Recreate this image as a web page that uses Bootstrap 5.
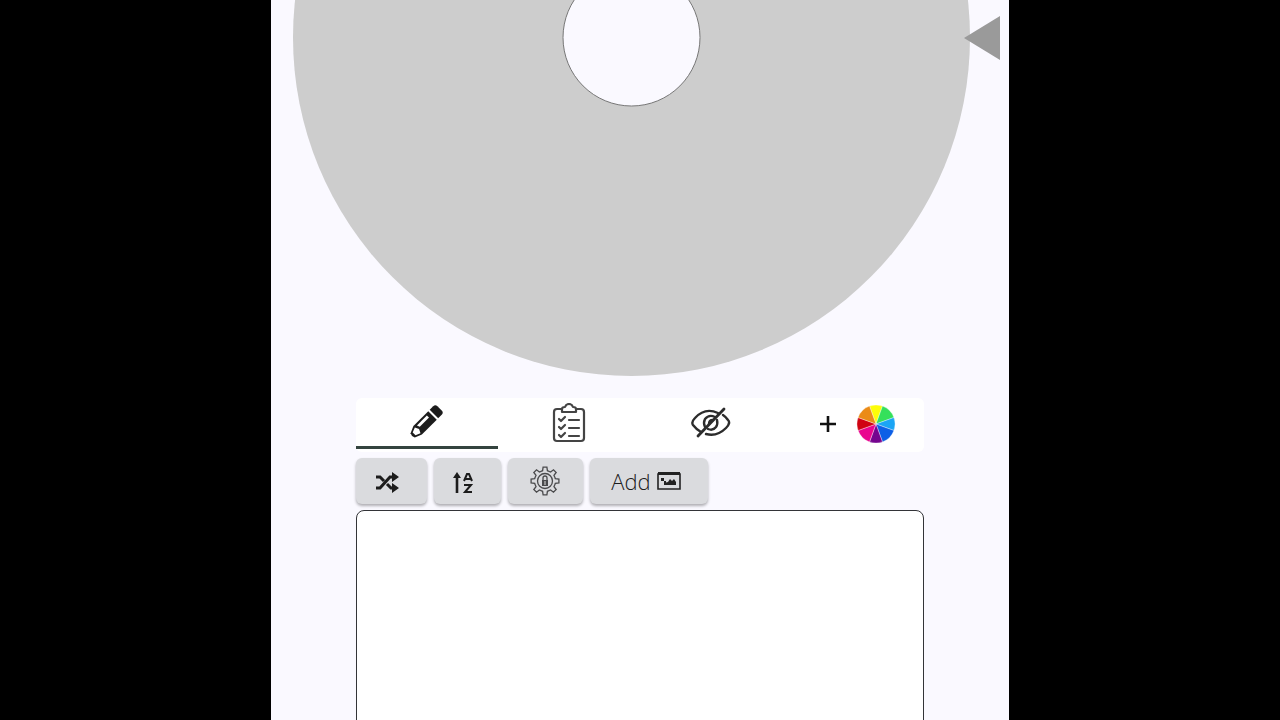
<!DOCTYPE html>
<html lang="en">
<head>
<meta charset="utf-8">
<meta name="viewport" content="width=device-width, initial-scale=1">
<title>Wheel</title>
<link href="https://cdn.jsdelivr.net/npm/bootstrap@5.3.0/dist/css/bootstrap.min.css" rel="stylesheet">
<style>
  body { background: #000; font-family: "Open Sans", "Noto Sans", sans-serif; }
  .stage { max-width: 738px; background: #faf9ff; }
  .wheel { width: 100%; }
  .panel { width: 77%; }
  .tabs { background: #fff; height: 54px; }
  .tab-btn { border: 0; border-bottom: 3px solid transparent; border-radius: 0; padding: 2px 0 0; background: none; height: 51px; color: #1c1c1c; }
  .tab-btn.active { border-bottom-color: #34443f; padding: 0 0 2px; }
  .tab-btn.add-wheel { padding: 4px 0 0 6px; }
  .tools { gap: 7px; padding: 6px 0; }
  .tool { height: 46px; border: 0; border-radius: 6px; background: #dadbde; color: #1c1c1c; box-shadow: 0 2px 3px #0000004d; display: flex; align-items: center; justify-content: center; padding: 0 8px; }
  .w-shuffle { width: 71px; }
  .w-sort { width: 67px; }
  .w-gear { width: 75px; }
  .w-add { width: 118px; font-size: 22px; font-weight: 300; line-height: 30px; gap: 6px; padding: 0 14px 0 8px; }
  .entries { height: 260px; border: 1px solid #333438; border-radius: 8px; resize: none; background: #fff; }
  .tab-btn svg, .tool svg { display: block; flex-shrink: 0; }
</style>
</head>
<body>
<main class="stage vh-100 mx-auto overflow-hidden d-flex flex-column">
  <svg class="wheel flex-shrink-0 d-block" viewBox="0 0 738 398" role="img" aria-label="Wheel">
    <circle cx="360.500" cy="37.500" r="338.500" fill="#cdcdcd"/>
    <circle cx="360.500" cy="37.500" r="68.500" fill="#faf9ff" stroke="#777" stroke-width="1"/>
    <path d="M693 38L729 16V60Z" fill="#9a9a9a"/>
  </svg>
  <section class="panel mx-auto flex-shrink-0">
    <nav class="tabs row g-0 rounded-2" aria-label="Views">
      <button class="tab-btn active col-3 d-flex align-items-center justify-content-center" type="button" aria-label="Edit">
        <svg width="34" height="34" viewBox="0 0 34 34"><g transform="translate(2 32) rotate(-45)">
          <path d="M0 0L1-3 8-6H29V6H8L1 3Z" fill="#1c1c1c"/>
          <path d="M3-2L8-4 10 0 8 4 3 2Z" fill="#fff"/>
          <path d="M11-4H25V-1H12Z" fill="#fff"/>
          <path d="M31-6H36Q39-6 39-3V3Q39 6 36 6H31Z" fill="#1c1c1c"/>
        </g></svg>
      </button>
      <button class="tab-btn col-3 d-flex align-items-center justify-content-center" type="button" aria-label="List">
        <svg width="34" height="40" viewBox="0 0 34 40" fill="none" stroke="#444" stroke-width="2.200" stroke-linejoin="round" stroke-linecap="round">
          <path d="M10 6H5Q2 6 2 9V35Q2 38 5 38H29Q32 38 32 35V9Q32 6 29 6H24"/>
          <path d="M10 9V6Q10 4 13 4 14 1 17 1T21 4Q24 4 24 6V9Z"/>
          <path d="M7 16L9 18 13 14M7 24L9 26 13 22M7 32L9 34 13 30M17 17H27M17 25H27M17 33H27"/>
        </svg>
      </button>
      <button class="tab-btn col-3 d-flex align-items-center justify-content-center" type="button" aria-label="Hide">
        <svg width="40" height="32" viewBox="0 0 40 32" fill="none" stroke="#2c2c2c" stroke-width="2.400" stroke-linecap="round">
          <path d="M27 6Q14 0 4 11 0 15 2 18 5 22 10 25M15 27Q26 30 35 21 40 16 37 13 35 10 32 8"/>
          <path d="M24 10Q18 7 14 12 12 16 14 20M17 22Q22 24 25 20 27 17 26 13"/>
          <path d="M22 13Q18 13 18 17"/>
          <path d="M33 2L7 29" stroke-width="2.800"/>
        </svg>
      </button>
      <button class="tab-btn add-wheel col-3 d-flex align-items-center justify-content-center" type="button" aria-label="Add wheel">
        <svg class="me-3" width="24" height="24" viewBox="0 0 24 24" stroke="#111" stroke-width="2.600"><path d="M4 12H20M12 4V20"/></svg>
        <svg width="40" height="40" viewBox="-20 -20 40 40" stroke="#fff" stroke-opacity=".6" stroke-width=".6">
          <path d="M0 0L-6.500-17.900A19 19 0 0 1 6.500-17.900Z" fill="#fdfd08"/>
          <path d="M0 0L6.500-17.900A19 19 0 0 1 17.900-6.500Z" fill="#35e05b"/>
          <path d="M0 0L17.900-6.500A19 19 0 0 1 17.900 6.500Z" fill="#1ba5f5"/>
          <path d="M0 0L17.900 6.500A19 19 0 0 1 6.500 17.900Z" fill="#0d5fe6"/>
          <path d="M0 0L6.500 17.900A19 19 0 0 1-6.500 17.900Z" fill="#75058f"/>
          <path d="M0 0L-6.500 17.900A19 19 0 0 1-17.900 6.500Z" fill="#e9058f"/>
          <path d="M0 0L-17.900 6.500A19 19 0 0 1-17.900-6.500Z" fill="#d00312"/>
          <path d="M0 0L-17.900-6.500A19 19 0 0 1-6.500-17.900Z" fill="#eb8b17"/>
        </svg>
      </button>
    </nav>
    <div class="tools d-flex">
      <button class="tool w-shuffle" type="button" aria-label="Shuffle">
        <svg class="me-2 mt-1" width="24" height="22" viewBox="0 0 24 22" fill="none" stroke="#1c1c1c" stroke-width="3">
          <path d="M1 5H5L9 9M12 12L16 16H19M1 16H5L15 5H19"/>
          <path d="M17 0L24 5 17 10ZM17 11L24 16 17 21Z" fill="#1c1c1c" stroke="none"/>
        </svg>
      </button>
      <button class="tool w-sort" type="button" aria-label="Sort">
        <svg class="me-2 mt-1" width="22" height="22" viewBox="0 0 22 22" fill="none" stroke="#1c1c1c" stroke-width="2">
          <path d="M5 21V4" stroke-width="2.600"/><path d="M5 0L9 6H1Z" fill="#1c1c1c" stroke="none"/>
          <path d="M12 9L15 2H17L20 9M13 7H19M12 13H19L13 20H20"/>
        </svg>
      </button>
      <button class="tool w-gear" type="button" aria-label="Settings">
        <svg width="30" height="30" viewBox="-15 -15 30 30" fill="none" stroke="#4a4a4c" stroke-width="1.300">
          <defs><path id="tooth" d="M-4-9.700L-2.400-10.300-1.900-13.900H1.900L2.400-10.300 4-9.700"/></defs>
          <use href="#tooth"/><use href="#tooth" transform="rotate(45)"/><use href="#tooth" transform="rotate(90)"/><use href="#tooth" transform="rotate(135)"/><use href="#tooth" transform="rotate(180)"/><use href="#tooth" transform="rotate(225)"/><use href="#tooth" transform="rotate(270)"/><use href="#tooth" transform="rotate(315)"/>
          <circle r="7.500"/><path d="M-2-1V-3Q-2-5 0-5T2-3V-1"/><path d="M-3-1H3V5H-3Z" fill="#4a4a4c" stroke="none"/><path d="M0 0V4" stroke="#bbb"/>
        </svg>
      </button>
      <button class="tool w-add" type="button">Add
        <svg width="24" height="20" viewBox="0 0 24 20">
          <path d="M1 3H23V18H1Z" fill="none" stroke="#222" stroke-width="1.600"/><path d="M1 1H23V4H1Z" fill="#222"/>
          <path d="M7 14V12L11 11 13 8 15 10 17 8 19 11V14Z" fill="#222"/><path d="M4 7H7V10H4ZM7 10H9V13H7Z" fill="#222"/>
        </svg>
      </button>
    </div>
    <textarea class="entries w-100 d-block p-2" aria-label="Entries"></textarea>
  </section>
</main>
<script src="https://cdn.jsdelivr.net/npm/bootstrap@5.3.0/dist/js/bootstrap.bundle.min.js"></script>
</body>
</html>
